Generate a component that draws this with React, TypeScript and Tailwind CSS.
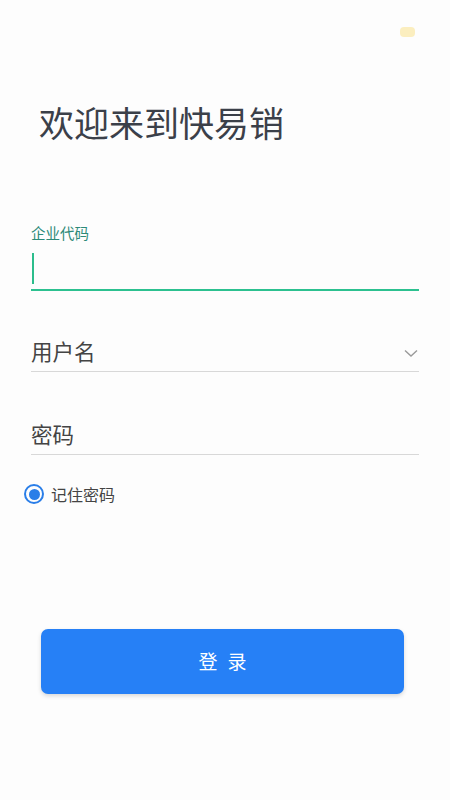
import { useState } from 'react';

const font = { fontFamily: '"Noto Sans CJK SC", "Noto Sans", sans-serif' };

export default function App() {
  const [remember, setRemember] = useState(true);

  return (
    <div className="relative min-h-[800px] w-[450px] bg-[#fdfdfd]" style={font}>
      {/* status bar blob */}
      <div className="absolute left-[400px] top-[27px] h-[10px] w-[15px] rounded-sm bg-[#fbeebf]" />

      <div className="flex flex-col pt-[98px]">
        {/* Title */}
        <h1 className="pl-[39px] text-[35px] leading-[48px] text-[#3b4049]">
          欢迎来到快易销
        </h1>

        {/* Company code (focused) */}
        <div className="mt-[77px] flex flex-col px-[31px]">
          <label className="text-[14.5px] leading-[20px] text-[#2c8a78]">企业代码</label>
          <div className="mt-[6px] flex h-[42px] items-start border-b-2 border-[#2cc190] pt-[4px]">
            <span className="ml-[1px] h-[31px] w-[2px] bg-[#2cbd8c]" />
          </div>
        </div>

        {/* Username */}
        <div className="mt-[45px] mx-[31px] flex h-[36px] items-center justify-between border-b border-[#d8d8d8] pb-[5px]">
          <span className="text-[21.5px] leading-[30px] text-[#444]">用户名</span>
          <svg width="14" height="9" viewBox="0 0 14 9" className="mr-[1px] mt-[4px]" fill="none">
            <path d="M1 1.5 L7 7 L13 1.5" stroke="#9a9a9a" strokeWidth="1.4" />
          </svg>
        </div>

        {/* Password */}
        <div className="mt-[47px] mx-[31px] flex h-[36px] items-center border-b border-[#d8d8d8] pb-[5px]">
          <span className="text-[21.5px] leading-[30px] text-[#444]">密码</span>
        </div>

        {/* Remember */}
        <button
          onClick={() => setRemember(!remember)}
          className="mt-[28px] ml-[24px] flex items-center gap-[7px] self-start"
        >
          <span className="flex h-[20px] w-[20px] items-center justify-center rounded-full border-2 border-[#2a7ee8]">
            {remember && <span className="h-[11px] w-[11px] rounded-full bg-[#2a7ee8]" />}
          </span>
          <span className="text-[16px] leading-[22px] text-[#444]">记住密码</span>
        </button>

        {/* Login */}
        <button className="mt-[124px] ml-[41px] flex h-[65px] w-[363px] items-center justify-center rounded-[7px] bg-[#2680f6] text-[19px] tracking-[10px] text-white shadow-[0_2px_4px_rgba(0,0,0,0.15)]">
          <span className="pl-[10px]">登录</span>
        </button>
      </div>
    </div>
  );
}
